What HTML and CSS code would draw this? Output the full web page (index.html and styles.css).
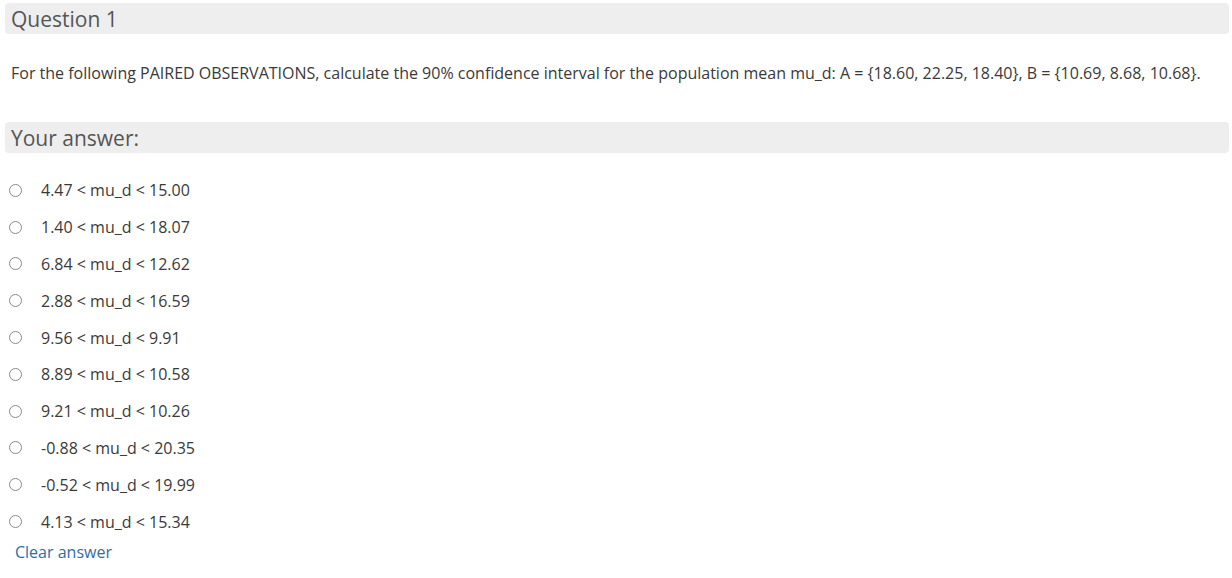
FILE: index.html
```html
<!DOCTYPE html>
<html>
<head>
<meta charset="utf-8">
<link rel="stylesheet" href="styles.css">
</head>
<body>
<div class="page">
  <h2 class="bar bar-q">Question 1</h2>
  <p class="qtext">For the following PAIRED OBSERVATIONS, calculate the 90% confidence interval for the population mean mu_d: A = {18.60, 22.25, 18.40}, B = {10.69, 8.68, 10.68}.</p>
  <h3 class="bar bar-a">Your answer:</h3>
  <ul class="options">
    <li><span class="radio"></span><span class="label">4.47 &lt; mu_d &lt; 15.00</span></li>
    <li><span class="radio"></span><span class="label">1.40 &lt; mu_d &lt; 18.07</span></li>
    <li><span class="radio"></span><span class="label">6.84 &lt; mu_d &lt; 12.62</span></li>
    <li><span class="radio"></span><span class="label">2.88 &lt; mu_d &lt; 16.59</span></li>
    <li><span class="radio"></span><span class="label">9.56 &lt; mu_d &lt; 9.91</span></li>
    <li><span class="radio"></span><span class="label">8.89 &lt; mu_d &lt; 10.58</span></li>
    <li><span class="radio"></span><span class="label">9.21 &lt; mu_d &lt; 10.26</span></li>
    <li><span class="radio"></span><span class="label">-0.88 &lt; mu_d &lt; 20.35</span></li>
    <li><span class="radio"></span><span class="label">-0.52 &lt; mu_d &lt; 19.99</span></li>
    <li><span class="radio"></span><span class="label">4.13 &lt; mu_d &lt; 15.34</span></li>
  </ul>
  <a class="clear">Clear answer</a>
</div>
</body>
</html>
```
FILE: styles.css
```css
html, body {
  margin: 0;
  padding: 0;
  background: #ffffff;
}
body {
  font-family: "Open Sans", "Noto Sans", sans-serif;
  color: #333333;
}
.page {
  padding: 3px 3px 0 5px;
  display: flex;
  flex-direction: column;
}
.bar {
  margin: 0;
  background: #eeeeee;
  border-radius: 4px;
  font-weight: 400;
  color: #555555;
  font-size: 21px;
  line-height: 30px;
  height: 30px;
  padding: 1px 0 0 6px;
}
.qtext {
  margin: 28px 0 0 6px;
  font-size: 16px;
  line-height: 22px;
  color: #3a3a3a;
}
.bar-a {
  margin-top: 38px;
}
.options {
  list-style: none;
  margin: 19px 0 0 0;
  padding: 0;
  display: flex;
  flex-direction: column;
}
.options li {
  display: flex;
  align-items: center;
  height: 36.8px;
  font-size: 16px;
  color: #3a3a3a;
}
.radio {
  width: 13px;
  height: 13px;
  border: 1px solid #8a8a8a;
  border-radius: 50%;
  margin-left: 4px;
  margin-right: 19px;
  box-sizing: border-box;
  flex: none;
}
.clear {
  margin: 1px 0 0 10px;
  font-size: 16px;
  line-height: 22px;
  color: #2f6ea4;
}
```
